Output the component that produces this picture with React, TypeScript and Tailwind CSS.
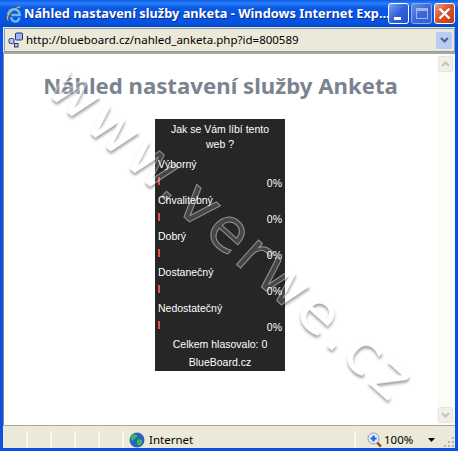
import React from "react";

const rows = ["Výborný", "Chvalitebný", "Dobrý", "Dostanečný", "Nedostatečný"];
const arial = { fontFamily: '"Liberation Sans", Arial, sans-serif' };
const noto = { fontFamily: '"Noto Sans", sans-serif' };
const dejavu = { fontFamily: '"DejaVu Sans", sans-serif' };

function CapButton({ kind }: { kind: "min" | "max" | "close" }) {
  const bg =
    kind === "close"
      ? "bg-[linear-gradient(135deg,#e8a08a_0%,#d9532c_45%,#bf3a14_100%)]"
      : kind === "min"
      ? "bg-[linear-gradient(135deg,#7ea2f0_0%,#2f62dc_50%,#2a52cf_100%)]"
      : "bg-[linear-gradient(135deg,#6f90e0_0%,#3a66d6_50%,#3560d2_100%)]";
  const border = kind === "max" ? "border-[#8fa8e8]" : "border-white";
  return (
    <div className={`flex h-[21px] w-[21px] shrink-0 items-center justify-center rounded-[3px] border ${border} ${bg}`}>
      {kind === "min" && <div className="mt-[10px] mr-[3px] h-[3px] w-[7px] bg-white" />}
      {kind === "max" && <div className="h-[11px] w-[12px] border border-t-[3px] border-[#9db4ec]" />}
      {kind === "close" && (
        <svg width="13" height="13" viewBox="0 0 13 13">
          <path d="M1.5 1.5 L11.5 11.5 M11.5 1.5 L1.5 11.5" stroke="#fff" strokeWidth="2.4" />
        </svg>
      )}
    </div>
  );
}

function IeLogo() {
  return (
    <svg className="shrink-0" width="18" height="18" viewBox="0 0 17 17">
      <path d="M3 9.5 a5.5 5.5 0 0 1 11 0 h-8 M6 11.5 a3.5 3.5 0 0 0 7.5 0.5" fill="none" stroke="#6fb8f0" strokeWidth="2.4" />
      <path d="M2 14 C0 10 7 3 15 1 C14 4 12 2 8 5 C4 8 2 12 3.5 15 Z" fill="#f0b020" />
    </svg>
  );
}

function PageIcon() {
  return (
    <svg className="shrink-0" width="16" height="16" viewBox="0 0 16 16">
      <rect x="7.5" y="1" width="7" height="7" rx="1" fill="#9db4f4" stroke="#24367e" />
      <rect x="1" y="6.5" width="5" height="5" rx="1.5" fill="#b6c8f4" stroke="#24367e" />
      <rect x="6.5" y="11.5" width="3.5" height="3.5" fill="#b6c8f4" stroke="#24367e" />
    </svg>
  );
}

function Globe() {
  return (
    <svg className="shrink-0" width="16" height="16" viewBox="0 0 16 16">
      <circle cx="8" cy="8" r="7.5" fill="#2a62c8" />
      <path d="M3 3 C6 1 9 3 8 5 C7 7 5 6 4 9 C2 8 1 5 3 3 Z M8 8 C11 6 14 8 13 11 C12 14 9 14 8 12 Z" fill="#3fb84a" />
    </svg>
  );
}

function Zoom() {
  return (
    <svg className="shrink-0" width="16" height="16" viewBox="0 0 16 16">
      <path d="M9.5 10 L14 14.5" stroke="#8a5a2a" strokeWidth="2.5" />
      <circle cx="6.5" cy="6.5" r="5.5" fill="#e6edf8" stroke="#8c98ac" />
      <path d="M6.5 3.5 V9.5 M3.5 6.5 H9.5" stroke="#1668d8" strokeWidth="2.2" />
    </svg>
  );
}

function ScrollBtn({ up }: { up?: boolean }) {
  return (
    <div className="flex h-[16px] w-[15px] items-center justify-center rounded-[2px] border border-[#e6e5dc] bg-[#f1f0e8]">
      <svg width="9" height="6" viewBox="0 0 9 6">
        <path d={up ? "M1 5 L4.5 1.5 L8 5" : "M1 1 L4.5 4.5 L8 1"} fill="none" stroke="#c4c3b8" strokeWidth="2" />
      </svg>
    </div>
  );
}

function Grip() {
  const dots = [
    [8, 0],
    [4, 4],
    [8, 4],
    [0, 8],
    [4, 8],
    [8, 8],
  ];
  return (
    <svg className="absolute bottom-[1px] right-[1px]" width="10" height="10" viewBox="0 0 10 10">
      {dots.map(([x, y]) => (
        <rect key={`${x}-${y}`} x={x} y={y} width="2" height="2" fill="#b8b5a4" />
      ))}
    </svg>
  );
}

export default function App() {
  return (
    <div className="flex h-[451px] w-[458px] flex-col overflow-hidden bg-[#0a50e4] px-[3px] pb-[3px]" style={arial}>
      {/* title bar */}
      <div className="-mx-[3px] flex h-[27px] shrink-0 items-center bg-[linear-gradient(180deg,#0a5ae8_0%,#2a80f8_12%,#0a58e6_30%,#0553e0_85%,#0446c8_100%)] pl-[5px] pr-[3px]">
        <IeLogo />
        <div
          className="ml-[1px] min-w-0 flex-1 whitespace-nowrap text-[12.8px] font-bold text-white [text-shadow:1px_1px_0_#0a2a90]"
          style={noto}
        >
          Náhled nastavení služby anketa - Windows Internet Exp...
        </div>
        <div className="flex shrink-0 gap-[2px]">
          <CapButton kind="min" />
          <CapButton kind="max" />
          <CapButton kind="close" />
        </div>
      </div>

      {/* address bar */}
      <div className="flex h-[27px] shrink-0 border-b-2 border-[#aca899] bg-[#ece9d8] pl-[1px] pt-[1px]">
        <div className="flex h-[24px] flex-1 items-center border border-[#7f9db9] pl-[3px] pr-[2px]">
          <PageIcon />
          <span className="ml-[2px] flex-1 whitespace-nowrap text-[11.5px] text-black" style={noto}>
            http://blueboard.cz/nahled_anketa.php?id=800589
          </span>
          <div className="flex h-[17px] w-[16px] items-center justify-center rounded-[2px] bg-[#b9cbf3]">
            <svg width="9" height="6" viewBox="0 0 9 6">
              <path d="M1 1 L4.5 4.5 L8 1" fill="none" stroke="#4d6185" strokeWidth="2" />
            </svg>
          </div>
        </div>
      </div>

      {/* page */}
      <div className="relative flex min-h-0 flex-1 overflow-hidden border-l border-[#8a887c] bg-white">
        <div
          className="absolute left-[-7px] top-[143px] z-0 w-[470px] rotate-[42deg] whitespace-nowrap text-center text-[60px] leading-[70px] tracking-[3.5px] text-white [text-shadow:2px_2px_3px_#a0a0a0]"
          style={dejavu}
        >
          www.verwe.cz
        </div>

        <div className="relative z-10 flex min-w-0 flex-1 flex-col items-center pt-[15px]">
          <h1 className="whitespace-nowrap text-center text-[22.2px] font-bold leading-[33px] text-[#7a8490]" style={noto}>
            Náhled nastavení služby Anketa
          </h1>
          <div className="mr-[1px] mt-[17px] flex h-[252px] w-[130px] flex-col bg-[#262626] px-[3px] pt-[3px] text-[10.5px] leading-[18px] text-white">
            <div className="px-[8px] text-center leading-[15px]">Jak se Vám líbí tento web ?</div>
            <div className="mt-[3px] flex flex-col">
              {rows.map((r) => (
                <div key={r} className="h-[36px]">
                  <div>{r}</div>
                  <div className="flex h-[20px] items-start justify-between">
                    <div className="mt-[4px] h-[8px] w-[2px] bg-[#e05050]" />
                    <span className="leading-[20px]">0%</span>
                  </div>
                </div>
              ))}
            </div>
            <div className="text-center">Celkem hlasovalo: 0</div>
            <div className="text-center">BlueBoard.cz</div>
          </div>
        </div>

        {/* scrollbar */}
        <div className="relative z-10 flex w-[18px] shrink-0 flex-col justify-between bg-[#fbfbf8] py-[2px] pl-[1px]">
          <ScrollBtn up />
          <ScrollBtn />
        </div>

        {/* translucent part of the watermark, seen over the dark panel */}
        <div
          aria-hidden="true"
          className="pointer-events-none absolute left-[-7px] top-[143px] z-20 w-[470px] rotate-[42deg] whitespace-nowrap text-center text-[60px] leading-[70px] tracking-[3.5px] text-white/15 [-webkit-text-stroke:1px_rgba(255,255,255,0.45)]"
          style={dejavu}
        >
          www.verwe.cz
        </div>
      </div>

      {/* status bar */}
      <div className="relative flex h-[23px] shrink-0 items-end border-t border-[#aca899] bg-[#ece9d8] text-[11.5px] text-black" style={noto}>
        <div className="h-[17px] w-[25px] border-r-2 border-[#f8f7f2]" />
        <div className="h-[17px] w-[24px] border-r-2 border-[#f8f7f2]" />
        <div className="h-[17px] w-[24px] border-r-2 border-[#f8f7f2]" />
        <div className="h-[17px] w-[24px] border-r-2 border-[#f8f7f2]" />
        <div className="h-[17px] w-[24px] border-r-2 border-[#f8f7f2]" />
        <div className="ml-[5px] flex h-[17px] w-[227px] items-center border-r-2 border-[#f8f7f2]">
          <Globe />
          <span className="ml-[4px]">Internet</span>
        </div>
        <div className="ml-[11px] flex h-[17px] items-center">
          <Zoom />
          <span className="ml-[1px]">100%</span>
        </div>
        <svg className="mb-[6px] ml-[15px]" width="7" height="4" viewBox="0 0 7 4">
          <path d="M0 0 H7 L3.5 4 Z" fill="#000" />
        </svg>
        <Grip />
      </div>
    </div>
  );
}
